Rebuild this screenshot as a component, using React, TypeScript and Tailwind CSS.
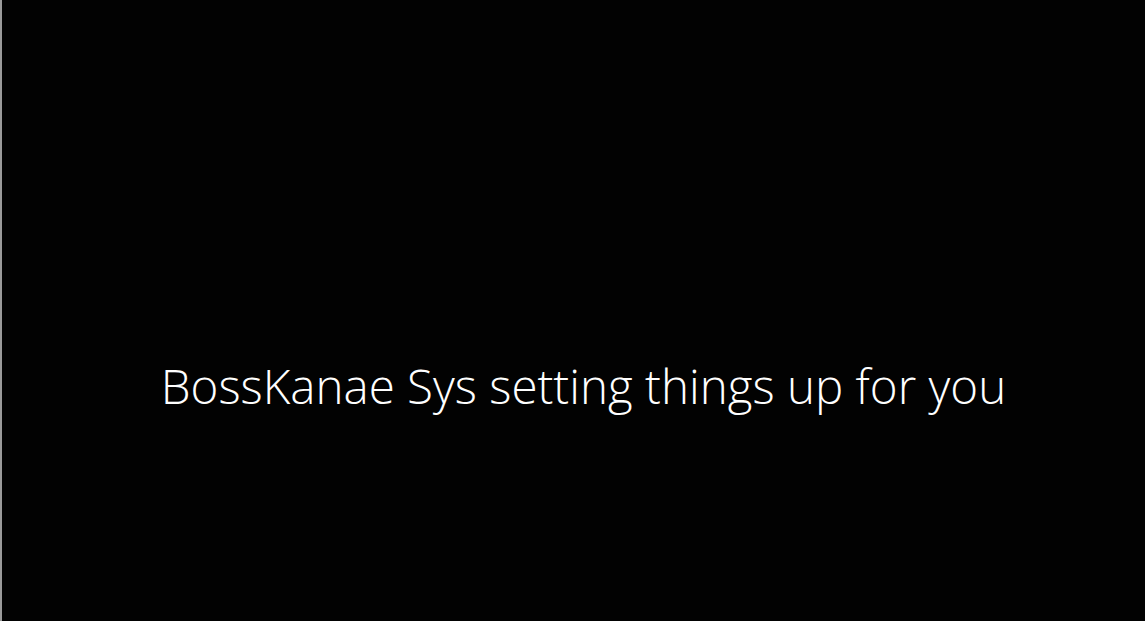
export default function App() {
  return (
    <div className="flex h-[621px] w-[1145px] bg-[#020202]">
      <div className="w-[2px] bg-[#9a9a9a]" />
      <div className="flex flex-1 items-start justify-center pt-[350px] pl-[20px]">
        <h1 className="font-['Open_Sans','Liberation_Sans',sans-serif] text-[47.5px] font-light leading-[72px] text-white">
          BossKanae Sys setting things up for you
        </h1>
      </div>
    </div>
  );
}
